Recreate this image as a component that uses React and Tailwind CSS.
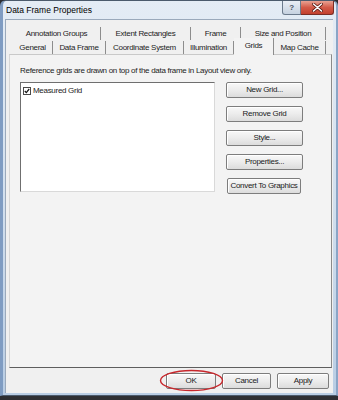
import React from "react";

const btn =
  "flex items-center justify-center h-[16px] border border-[#7d7d7d] rounded-[2px] bg-gradient-to-b from-[#f8f8f8] via-[#ececec] to-[#dcdcdc] text-[#1a1a1a] shadow-[inset_1px_1px_0_#ffffff]";

function Tab({ w, label }) {
  return (
    <div
      className="flex items-center justify-center h-[13px] border-r border-[#8d8d8d]"
      style={{ width: w }}
    >
      <span className="whitespace-nowrap">{label}</span>
    </div>
  );
}

export default function App() {
  return (
    <div className="w-[338px] h-[400px] bg-[#2e2f33] overflow-hidden font-['Liberation_Sans',Arial,sans-serif] text-[8px] tracking-[-0.3px] text-[#1c1c1c]">
      <div className="w-[338px] h-[396px] rounded-t-[6px] border border-[#4b5a6c] border-l-[3px] border-l-[#7f9cc2] border-r-[2px] border-r-[#8aa5c6] bg-gradient-to-b from-[#e4ecf5] via-[#d3e0ee] to-[#b9cde4] flex flex-col">
        {/* title bar */}
        <div className="h-[18px] flex items-start shrink-0">
          <div className="flex-1 pl-[3px] pt-[5px] text-[8.5px] tracking-normal text-black leading-none">
            Data Frame Properties
          </div>
          <div className="flex mr-[2px]">
            <div className="w-[19px] h-[14px] rounded-bl-[3px] border border-[#6b7a8c] border-t-0 bg-gradient-to-b from-[#e9eef5] to-[#c6d2e0] flex items-center justify-center text-[8px] text-[#4a5566] font-bold">
              ?
            </div>
            <div className="w-[33px] h-[14px] rounded-br-[3px] border border-[#7a2d25] border-t-0 border-l-0 bg-gradient-to-b from-[#e8a193] via-[#d35a48] to-[#c2402e] flex items-center justify-center">
              <svg width="11" height="9" viewBox="0 0 11 9">
                <path d="M1.5 1 L9.5 8 M9.5 1 L1.5 8" stroke="#5a1a12" strokeWidth="3" strokeLinecap="round" />
                <path d="M1.5 1 L9.5 8 M9.5 1 L1.5 8" stroke="#ffffff" strokeWidth="1.6" strokeLinecap="round" />
              </svg>
            </div>
          </div>
        </div>

        {/* client area */}
        <div className="ml-[2px] mr-[3px] mb-[2px] flex-1 bg-[#f0f0f0] border-l border-t border-[#9aa9bb] flex flex-col">
          {/* tabs */}
          <div className="pl-[7px] pt-[7px] flex flex-col">
            <div className="flex h-[13px]">
              <Tab w={88} label="Annotation Groups" />
              <Tab w={90} label="Extent Rectangles" />
              <Tab w={50} label="Frame" />
              <Tab w={85} label="Size and Position" />
            </div>
            <div className="flex items-end h-[14px]">
              <Tab w={40} label="General" />
              <Tab w={53} label="Data Frame" />
              <Tab w={78} label="Coordinate System" />
              <Tab w={50} label="Illumination" />
              <div className="relative z-10 w-[40px] h-[17px] -mb-px bg-[#f3f3f3] border-r border-[#8d8d8d] flex justify-center pt-[2px]">
                Grids
              </div>
              <Tab w={52} label="Map Cache" />
            </div>
          </div>

          {/* panel */}
          <div className="ml-[3px] mr-[1px] h-[314px] bg-[#f3f3f3] border-t border-l border-t-[#c9c9c9] border-l-[#d6d6d6] border-r border-r-[#8a8a8a] border-b border-b-[#5e5e5e] pl-[10px] pt-[11px] flex flex-col">
            <div className="leading-[10px] whitespace-nowrap">
              Reference grids are drawn on top of the data frame in Layout view only.
            </div>
            <div className="flex mt-[6px]">
              <div className="w-[195px] h-[110px] bg-white border-t border-l border-t-[#6f6f6f] border-l-[#6f6f6f] border-r border-b border-r-[#d9d9d9] border-b-[#d9d9d9] pt-[3px] pl-[2px]">
                <div className="flex items-center h-[9px]">
                  <div className="w-[8px] h-[8px] border border-[#4a4a4a] bg-white flex items-center justify-center">
                    <svg width="6" height="6" viewBox="0 0 6 6">
                      <path d="M0.8 3 L2.3 4.6 L5.2 1" stroke="#111" strokeWidth="1.2" fill="none" />
                    </svg>
                  </div>
                  <span className="ml-[2px]">Measured Grid</span>
                </div>
              </div>
              <div className="ml-[11px] flex flex-col gap-[8px] w-[77px]">
                <div className={btn}>New Grid...</div>
                <div className={btn}>Remove Grid</div>
                <div className={btn}>Style...</div>
                <div className={btn}>Properties...</div>
                <div className={`${btn} w-[74px] ml-px`}>Convert To Graphics</div>
              </div>
            </div>
          </div>

          {/* bottom buttons */}
          <div className="flex justify-end pr-[4px] mt-[5px] gap-[6px]">
            <div className="relative">
              <div className={`${btn} w-[50px]`}>OK</div>
              <svg className="absolute left-[-7px] top-[-4px]" width="65" height="23" viewBox="0 0 65 23">
                <ellipse cx="32.5" cy="11.5" rx="31" ry="10" fill="none" stroke="#c8272c" strokeWidth="1.4" />
              </svg>
            </div>
            <div className={`${btn} w-[49px]`}>Cancel</div>
            <div className={`${btn} w-[52px]`}>Apply</div>
          </div>
        </div>
      </div>
    </div>
  );
}
